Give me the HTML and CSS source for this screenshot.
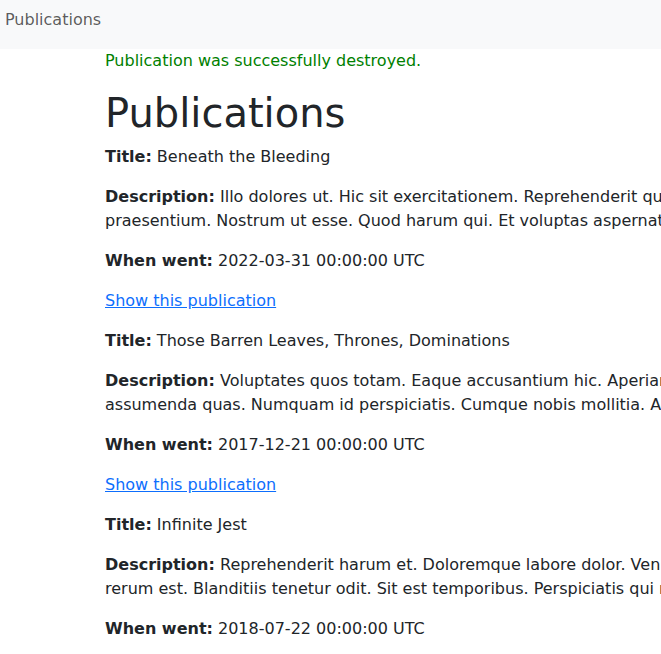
FILE: index.html
```html
<!DOCTYPE html>
<html lang="en">
<head>
<meta charset="utf-8">
<title>Publications</title>
<link rel="stylesheet" href="styles.css">
</head>
<body>
<nav class="navbar">
  <a class="navbar-brand" href="#">Publications</a>
</nav>
<main class="container">
  <p class="notice">Publication was successfully destroyed.</p>
  <h1 class="page-title">Publications</h1>
  <div class="publications">
    <div class="publication">
      <p><strong>Title:</strong> Beneath the Bleeding</p>
      <p><strong>Description:</strong> Illo dolores ut. Hic sit exercitationem. Reprehenderit qui ipsam. Sed facilis ut. Ipsum et quia. praesentium. Nostrum ut esse. Quod harum qui. Et voluptas aspernatur. Quia sed est.</p>
      <p><strong>When went:</strong> 2022-03-31 00:00:00 UTC</p>
    </div>
    <p><a class="link" href="#">Show this publication</a></p>
    <div class="publication">
      <p><strong>Title:</strong> Those Barren Leaves, Thrones, Dominations</p>
      <p><strong>Description:</strong> Voluptates quos totam. Eaque accusantium hic. Aperiam sint eveniet. Quia ut dolores rem. Et assumenda quas. Numquam id perspiciatis. Cumque nobis mollitia. Aut rerum ut.</p>
      <p><strong>When went:</strong> 2017-12-21 00:00:00 UTC</p>
    </div>
    <p><a class="link" href="#">Show this publication</a></p>
    <div class="publication">
      <p><strong>Title:</strong> Infinite Jest</p>
      <p><strong>Description:</strong> Reprehenderit harum et. Doloremque labore dolor. Veniam quo sed. Et aut velit. Omnis sunt quae rerum est. Blanditiis tenetur odit. Sit est temporibus. Perspiciatis qui rem.</p>
      <p><strong>When went:</strong> 2018-07-22 00:00:00 UTC</p>
    </div>
    <p><a class="link" href="#">Show this publication</a></p>
  </div>
</main>
</body>
</html>
```

FILE: styles.css
```css
html, body {
  overflow-x: hidden;
}
body {
  margin: 0;
  font-family: "DejaVu Sans", sans-serif;
  font-size: 16px;
  line-height: 1.5;
  color: #212529;
  background: #fff;
}
.navbar {
  display: flex;
  align-items: center;
  height: 49px;
  padding: 0 5px;
  background: #f8f9fa;
}
.navbar-brand {
  color: rgba(0, 0, 0, 0.65);
  text-decoration: none;
  font-size: 16px;
  line-height: 24px;
  margin-top: -9px;
}
.container {
  width: 936px;
  padding-left: 105px;
}
p {
  margin: 0 0 16px;
}
.notice {
  color: #008000;
}
.page-title {
  margin: 0 0 8px;
  font-size: 40px;
  font-weight: 500;
  line-height: 1.2;
}
strong {
  font-weight: bold;
}
.link {
  color: #0d6efd;
  text-decoration: underline;
}
```
